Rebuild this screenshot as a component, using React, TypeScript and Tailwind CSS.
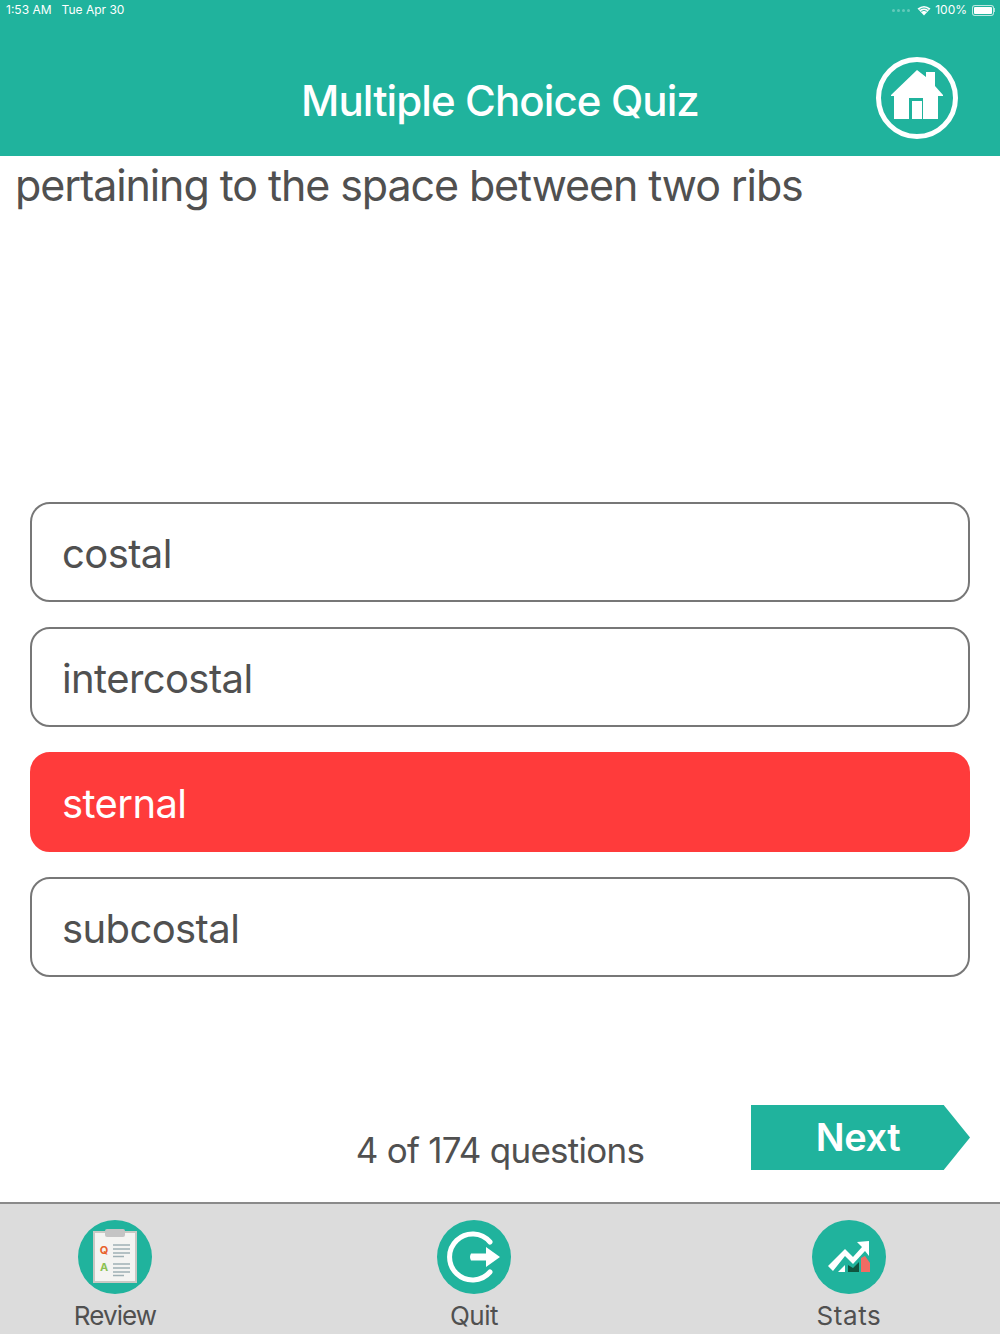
import React from 'react';

const FONT = "font-['Inter','Liberation_Sans',sans-serif]";

const options = [
  { label: 'costal', wrong: false },
  { label: 'intercostal', wrong: false },
  { label: 'sternal', wrong: true },
  { label: 'subcostal', wrong: false },
];

const HomeIcon = () => (
  <svg width="84" height="84" viewBox="0 0 84 84" className="block">
    <circle cx="42" cy="42" r="38.500" fill="none" stroke="#fff" strokeWidth="5" />
    <path
      fill="#fff"
      d="M42 14 L51 21 V16 H60 V30 L68 39 V40 H63 V63 H19 V40 H16 V39 Z"
    />
    <rect x="34" y="42" width="14" height="21" fill="#20b39d" />
    <rect x="37" y="45" width="10" height="18" fill="#fff" />
  </svg>
);

const ReviewIcon = () => (
  <svg width="74" height="74" viewBox="0 0 74 74" className="block">
    <circle cx="37" cy="37" r="37" fill="#20b39d" />
    <rect x="15" y="11" width="44" height="52" fill="#c9c9c4" />
    <rect x="17" y="13" width="40" height="48" fill="#f4f4f2" />
    <rect x="27" y="9" width="20" height="8" rx="2" fill="#c4c4c4" />
    <text x="26" y="34" fontSize="11" fontWeight="700" fill="#e8622c" textAnchor="middle" fontFamily="Inter">Q</text>
    <text x="26" y="51" fontSize="11" fontWeight="700" fill="#8cc152" textAnchor="middle" fontFamily="Inter">A</text>
    <g stroke="#9fb0b5" strokeWidth="1.500">
      <path d="M35 25 H52 M35 29 H52 M35 33 H52 M35 36.500 H46" />
      <path d="M35 44 H52 M35 48 H52 M35 52 H52 M35 55.500 H46" />
    </g>
  </svg>
);

const QuitIcon = () => (
  <svg width="74" height="74" viewBox="0 0 74 74" className="block">
    <circle cx="37" cy="37" r="37" fill="#20b39d" />
    <path d="M53 22 A23 23 0 1 0 53 52" fill="none" stroke="#fff" strokeWidth="5" strokeLinecap="round" />
    <path d="M34 33.500 H49 V27 L63 37 L49 47 V40.500 H34 Q32 37 34 33.500 Z" fill="#fff" />
  </svg>
);

const StatsIcon = () => (
  <svg width="74" height="74" viewBox="0 0 74 74" className="block">
    <circle cx="37" cy="37" r="37" fill="#20b39d" />
    <path d="M26 52 L33 45 V52 Z" fill="#fff" />
    <path d="M36 52 V45 L41 48 L47 42 V52 Z" fill="#10543f" />
    <path d="M49 38 L53 36 L58 43 V52 H49 Z" fill="#f26b63" />
    <path d="M16 46 L33 29 L41 37 L50 27 L45 22 L57 21 L57 36 L53 31 L41 44 L33 36 L21 51 Z" fill="#fff" />
  </svg>
);

const tabs = [
  { label: 'Review', icon: <ReviewIcon />, cls: 'left-[78px]', textCls: 'tracking-[-0.9px]' },
  { label: 'Quit', icon: <QuitIcon />, cls: 'left-[437px]', textCls: 'tracking-[-0.5px]' },
  { label: 'Stats', icon: <StatsIcon />, cls: 'left-[812px]', textCls: 'tracking-[0.6px]' },
];

export default function App() {
  return (
    <div className={`flex h-[1334px] w-[1000px] flex-col overflow-hidden bg-white text-[#505050] ${FONT}`}>
      <header className="h-[156px] shrink-0 bg-[#20b39d] text-white">
        <div className="flex h-5 items-center justify-between pl-[6px] pr-[5px] text-[12px]">
          <div className="flex gap-[10px]">
            <span>1:53 AM</span>
            <span>Tue Apr 30</span>
          </div>
          <div className="flex items-center gap-[4px]">
            <div className="mr-[3px] flex gap-[2px]">
              <span className="h-[3px] w-[3px] rounded-full bg-white/30" />
              <span className="h-[3px] w-[3px] rounded-full bg-white/30" />
              <span className="h-[3px] w-[3px] rounded-full bg-white/30" />
              <span className="h-[3px] w-[3px] rounded-full bg-white/30" />
            </div>
            <svg width="14" height="11" viewBox="0 0 14 11">
              <path d="M7 10.500 L0.500 3.500 Q7 -1.500 13.500 3.500 Z" fill="#fff" />
              <path d="M2.600 4.600 Q7 1.400 11.400 4.600 M4.200 6.400 Q7 4.300 9.800 6.400" stroke="#20b39d" strokeWidth="0.900" fill="none" />
            </svg>
            <span>100%</span>
            <div className="ml-[1px] flex items-center">
              <div className="h-[11px] w-[22px] rounded-[3px] border border-white/70 bg-white bg-clip-content p-[1px]" />
              <div className="h-[4px] w-[1px] bg-white/60" />
            </div>
          </div>
        </div>
        <div className="relative flex h-[136px] justify-center pt-[55px]">
          <h1 className="text-[42px] font-medium leading-[52px] tracking-[-0.9px]">Multiple Choice Quiz</h1>
          <div className="absolute left-[875px] top-[36px]">
            <HomeIcon />
          </div>
        </div>
      </header>

      <p className="mt-[3px] h-[343px] shrink-0 pl-[15px] text-[43px] font-normal leading-[52px] tracking-[-1.1px]">
        pertaining to the space between two ribs
      </p>

      <div className="flex shrink-0 flex-col gap-[25px] px-[30px]">
        {options.map((o) => (
          <div
            key={o.label}
            className={`flex h-[100px] items-center rounded-[20px] border-2 pl-[31px] text-[40px] font-normal tracking-[-0.6px] ${
              o.wrong ? 'border-[#ff3b3b] bg-[#ff3b3b] text-white' : 'border-[#777777] text-[#505050]'
            }`}
          >
            <span className="-ml-px mt-[4px]">{o.label}</span>
          </div>
        ))}
      </div>

      <div className="relative flex-1">
        <div className="absolute inset-x-0 top-[151px] text-center text-[35px] font-normal leading-[44px] tracking-[-0.75px]">
          4 of 174 questions
        </div>
        <div className="absolute left-[751px] top-[128px] flex h-[65px] w-[219px] items-center justify-center bg-[#20b39d] pr-[5px] text-[38px] font-semibold tracking-[-0.4px] text-white [clip-path:polygon(0_0,88%_0,100%_50%,88%_100%,0_100%)]">
          Next
        </div>
      </div>

      <footer className="relative h-[132px] shrink-0 border-t-2 border-[#8a8a8a] bg-[#dcdcdc]">
        {tabs.map((t) => (
          <div key={t.label} className={`absolute top-[16px] flex w-[74px] flex-col items-center ${t.cls}`}>
            {t.icon}
            <span className={`mt-[4px] whitespace-nowrap text-[26px] font-normal leading-[36px] ${t.textCls}`}>{t.label}</span>
          </div>
        ))}
      </footer>
    </div>
  );
}
